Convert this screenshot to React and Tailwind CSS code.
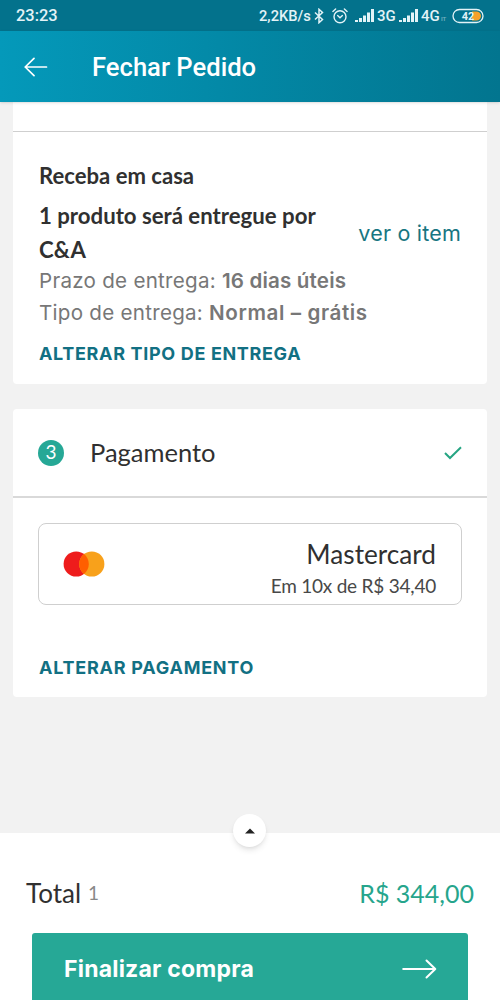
function SignalBars() {
  return (
    <svg width="19" height="14" viewBox="0 0 19 14" fill="currentColor">
      <rect x="0" y="11" width="3" height="2" />
      <rect x="4" y="9" width="3" height="4" />
      <rect x="8" y="6.5" width="3" height="6.5" />
      <rect x="12" y="3.5" width="3" height="9.5" />
      <rect x="16" y="0" width="3" height="13" />
    </svg>
  )
}

function BluetoothIcon() {
  return (
    <svg width="10" height="16" viewBox="0 0 10 16" fill="none" stroke="currentColor" strokeWidth="1.5">
      <path d="M1 4.5l7.5 7L5 14.7V1.3l3.5 3.2-7.5 7" />
    </svg>
  )
}

function AlarmIcon() {
  return (
    <svg width="16" height="16" viewBox="0 0 16 16" fill="none" stroke="currentColor" strokeWidth="1.4" strokeLinecap="round">
      <circle cx="8" cy="8.7" r="6" />
      <path d="M5.6 7.6L8 9.8l2.4-2.2M.9 3.4L3.6 1M15.1 3.4L12.4 1" />
    </svg>
  )
}

function StatusBar() {
  return (
    <div className="h-[31px] shrink-0 flex items-center bg-[#03728c] pl-4 pr-4 text-[#e3f3f7] font-[Roboto,sans-serif] font-medium">
      <span className="text-[16.4px] leading-5">23:23</span>
      <div className="ml-auto flex items-center leading-5">
        <span className="w-[52px] whitespace-nowrap text-[14.7px]">2,2KB/s</span>
        <span className="ml-[3px]"><BluetoothIcon /></span>
        <span className="ml-2"><AlarmIcon /></span>
        <span className="ml-[7px]"><SignalBars /></span>
        <span className="ml-[3px] w-[19px] text-[15px]">3G</span>
        <span className="ml-[3px]"><SignalBars /></span>
        <span className="ml-[3px] w-[19px] text-[15px]">4G</span>
        <span className="ml-[1px] mt-1.5 w-[6px] text-[6px] leading-none opacity-50">IT</span>
        <svg className="ml-[5px]" width="32" height="16" viewBox="0 0 32 16">
          <rect x="1" y="1.5" width="30" height="13" rx="6.5" fill="none" stroke="#e3f3f7" strokeWidth="1.3" />
          <path d="M20 3.5h4.5a4.5 4.5 0 0 1 0 9H20z" fill="#f5a12c" />
          <text x="16" y="12" textAnchor="middle" fontFamily="Roboto" fontWeight="700" fontSize="11" fill="#e3f3f7">42</text>
        </svg>
      </div>
    </div>
  )
}

function Header() {
  return (
    <header className="h-[71px] shrink-0 flex items-center bg-linear-to-r from-[#0499ba] to-[#02758f] pl-6 shadow-sm z-10 text-white">
      <svg width="24" height="20" viewBox="0 0 24 20" fill="none" stroke="currentColor" strokeWidth="1.7" strokeLinecap="round" strokeLinejoin="round">
        <path d="M22.5 10H1.2M10 1.3L1.2 10l8.8 8.7" />
      </svg>
      <h1 className="ml-11 mt-[2px] font-[Roboto,sans-serif] text-[25.6px] font-medium">Fechar Pedido</h1>
    </header>
  )
}

function DeliveryCard() {
  return (
    <section className="h-[282px] shrink-0 bg-white rounded-b">
      <div className="h-[30px] border-b border-[#cfcfcf]" />
      <div className="px-[26px] pt-[27px]">
        <h2 className="text-[22.1px] leading-[34px] font-bold">Receba em casa</h2>
        <div className="mt-1.5 flex items-center justify-between">
          <p className="w-[290px] text-[22.2px] leading-[34px] font-bold">1 produto será entregue por C&amp;A</p>
          <a className="whitespace-nowrap font-[Inter,sans-serif] text-[21.5px] tracking-[0.2px] text-[#177682]">ver o item</a>
        </div>
        <div className="-mt-0.5 font-[Inter,sans-serif] text-[20.6px] leading-[31.5px] tracking-[0.26px] text-[#777]">
          <p>Prazo de entrega: <span className="font-semibold tracking-[0.15px]">16 dias úteis</span></p>
          <p>Tipo de entrega: <span className="font-semibold tracking-[0.6px]">Normal – grátis</span></p>
        </div>
        <a className="mt-[14px] block font-[Inter,sans-serif] text-[18px] leading-6 font-bold tracking-[0.66px] text-[#127083]">ALTERAR TIPO DE ENTREGA</a>
      </div>
    </section>
  )
}

function PaymentCard() {
  return (
    <section className="mt-[25px] h-[288px] shrink-0 bg-white rounded">
      <div className="flex h-[89px] items-center border-b-2 border-[#d9d9d9] px-[25px]">
        <span className="flex size-[26px] items-center justify-center rounded-full bg-[#26a896] text-[19px] text-white">3</span>
        <h2 className="ml-[26px] text-[25.5px]">Pagamento</h2>
        <svg className="ml-auto" width="18" height="14" viewBox="0 0 18 14" fill="none" stroke="#26a583" strokeWidth="2">
          <path d="M1 7l5 5L17 1.2" />
        </svg>
      </div>
      <div className="px-[25px] pt-[25px]">
        <div className="flex h-[82px] items-center justify-between rounded-lg border-[1.5px] border-[#cfcfcf] pl-6 pr-[25px]">
          <svg width="42" height="26" viewBox="0 0 42 26">
            <circle cx="13.2" cy="13" r="12.6" fill="#ee1c1c" />
            <circle cx="28.8" cy="13" r="12.6" fill="#f8a11b" />
            <path d="M21 3.1a12.6 12.6 0 0 1 0 19.8a12.6 12.6 0 0 1 0-19.8z" fill="#ff5f00" />
          </svg>
          <div className="pt-[11px] text-right">
            <p className="text-[26.2px] leading-8">Mastercard</p>
            <p className="text-[19px] leading-[31px] tracking-[-0.22px] text-[#484848]">Em 10x de R$ 34,40</p>
          </div>
        </div>
        <a className="mt-[51px] ml-px block font-[Inter,sans-serif] text-[18px] leading-6 font-bold tracking-[0.76px] text-[#127083]">ALTERAR PAGAMENTO</a>
      </div>
    </section>
  )
}

function Footer() {
  return (
    <footer className="relative h-[167px] shrink-0 bg-white">
      <button className="absolute -top-[19px] left-[233px] flex size-[33px] items-center justify-center rounded-full bg-white shadow-md">
        <svg width="10" height="6" viewBox="0 0 10 6" fill="#222">
          <path d="M0 5.5L5 .5l5 5z" />
        </svg>
      </button>
      <div className="flex items-center pt-[42px] pl-[26px] pr-[26px] leading-[37px]">
        <span className="text-[26px]">Total</span>
        <span className="ml-[7px] -mt-0.5 text-[19px] text-[#888]">1</span>
        <span className="ml-auto text-[25px] text-[#26a58c]">R$ 344,00</span>
      </div>
      <button className="mt-[21px] mx-8 flex h-[67px] w-[436px] items-center justify-between rounded-t-[3px] bg-[#26a896] pl-8 pr-[31px] pt-1 text-white">
        <span className="pt-0.5 font-[Inter,sans-serif] text-[23px] font-bold tracking-[0.2px]">Finalizar compra</span>
        <svg width="35" height="20" viewBox="0 0 35 20" fill="none" stroke="currentColor" strokeWidth="2" strokeLinecap="round" strokeLinejoin="round">
          <path d="M1.2 10h32M24.5 1.5l8.8 8.5-8.8 8.5" />
        </svg>
      </button>
    </footer>
  )
}

export default function App() {
  return (
    <div className="flex h-[1000px] w-[500px] flex-col overflow-hidden bg-[#f2f2f2] font-[Lato,sans-serif] text-[#303030]">
      <StatusBar />
      <Header />
      <main className="flex flex-1 flex-col px-[13px]">
        <DeliveryCard />
        <PaymentCard />
      </main>
      <Footer />
    </div>
  )
}
